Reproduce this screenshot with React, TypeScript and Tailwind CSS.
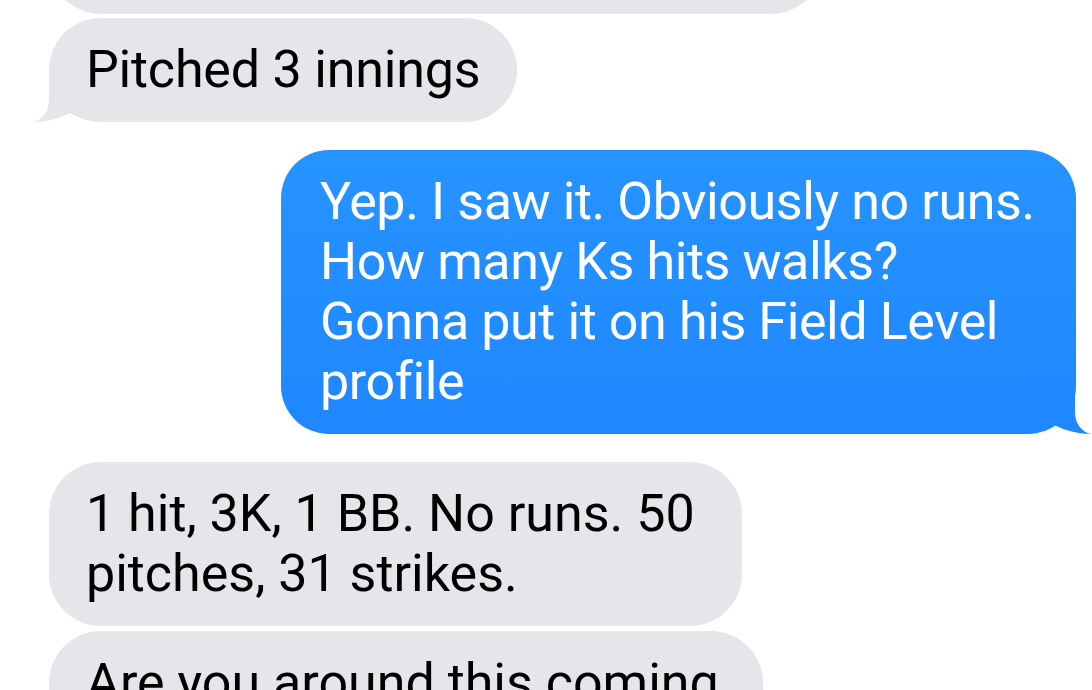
const font = { fontFamily: 'Roboto, "Noto Sans", sans-serif' };

function LeftTail() {
  return (
    <svg
      className="absolute bottom-0 left-[-17px]"
      width="73"
      height="52"
      viewBox="0 0 73 52"
    >
      <path
        d="M17 0 L17 30 C17 42 10 50 1 52 C12 52 26 49 38 43 C48 49 60 52 73 52 L73 0 Z"
        fill="#e5e5ea"
      />
    </svg>
  );
}

function RightTail() {
  return (
    <svg
      className="absolute bottom-0 right-[-16px]"
      width="73"
      height="52"
      viewBox="0 0 73 52"
    >
      <path
        d="M56 0 L56 30 C56 42 63 50 72 52 C61 52 47 49 35 43 C25 49 13 52 0 52 L0 0 Z"
        fill="#1f87ff"
      />
    </svg>
  );
}

function Received({ text, className, tail }: { text: string; className?: string; tail?: boolean }) {
  return (
    <div
      className={`relative self-start rounded-[52px] bg-[#e5e5ea] px-[37px] py-[22px] text-[52px] leading-[60px] text-black ${className ?? ''}`}
    >
      {tail && <LeftTail />}
      <span className="relative">{text}</span>
    </div>
  );
}

export default function App() {
  return (
    <div className="h-[690px] w-[1092px] overflow-hidden bg-white" style={font}>
      <div className="flex flex-col pl-[49px] pr-[16px]">
        <div className="mt-[-90px] h-[104px] w-[774px] self-start rounded-[52px] bg-[#e5e5ea]" />

        <Received text="Pitched 3 innings" className="mt-[4px] tracking-[-0.2px]" tail />

        <div className="relative mt-[28px] max-w-[795px] self-end rounded-[48px] bg-gradient-to-b from-[#2694ff] to-[#1f87ff] px-[39px] py-[22px] text-[52px] leading-[60px] tracking-[-0.4px] text-white">
          <RightTail />
          <span className="relative">
            Yep. I saw it. Obviously no runs. How many Ks hits walks? Gonna put it on his Field Level profile
          </span>
        </div>

        <Received
          text="1 hit, 3K, 1 BB. No runs. 50 pitches, 31 strikes."
          className="mt-[28px] max-w-[693px]"
        />

        <Received
          text="Are you around this coming weekend?"
          className="mt-[5px] max-w-[714px]"
        />
      </div>
    </div>
  );
}
